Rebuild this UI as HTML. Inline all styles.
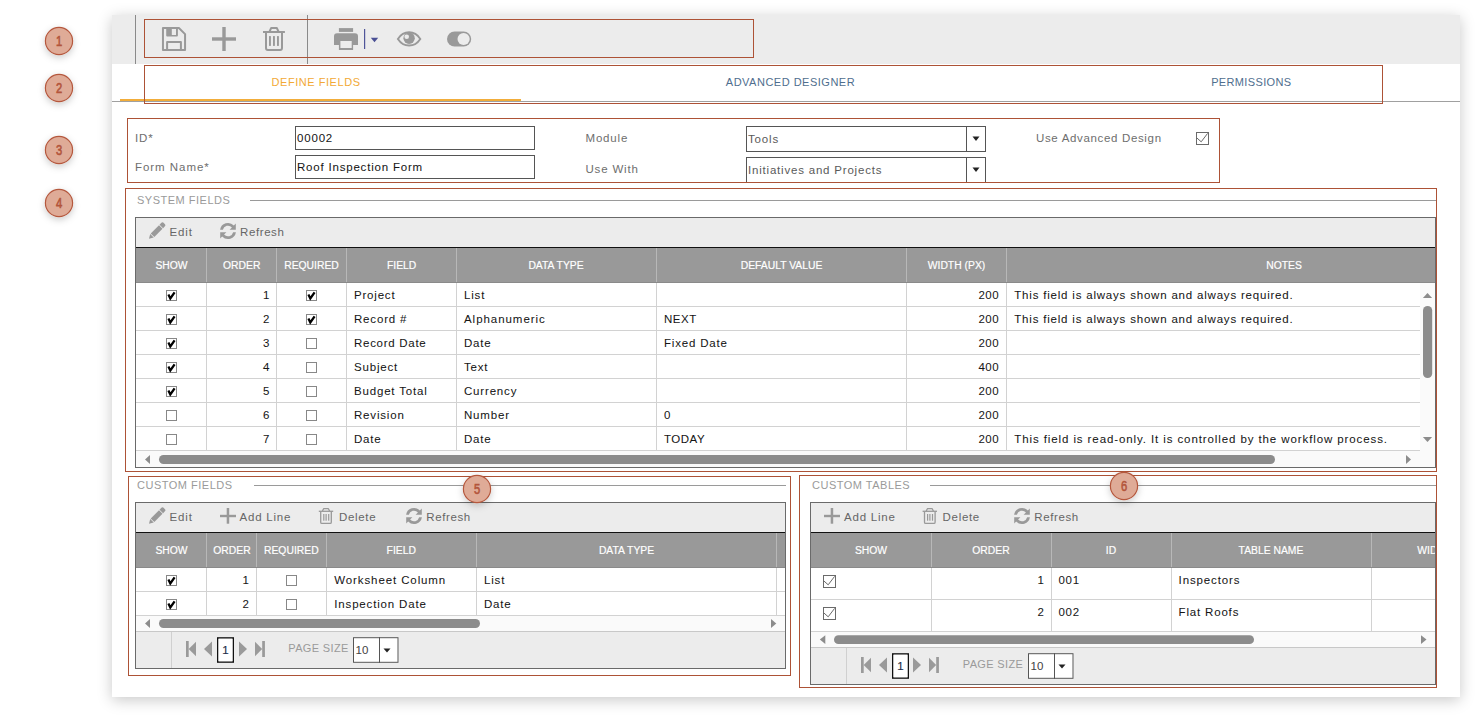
<!DOCTYPE html>
<html><head><meta charset="utf-8"><title>Form Designer</title>
<style>
html,body{margin:0;padding:0;background:#fff;width:1479px;height:720px;overflow:hidden}
#panel{position:absolute;left:112px;top:15px;width:1348px;height:682px;background:#fff;box-shadow:0 3px 14px rgba(0,0,0,0.22)}
svg{position:absolute;left:0;top:0}
text{font-family:"Liberation Sans", sans-serif}
</style></head><body>
<div id="panel"></div>
<svg width="1479" height="720" viewBox="0 0 1479 720">
<defs><filter id="bsh" x="-60%" y="-60%" width="220%" height="220%"><feDropShadow dx="0" dy="2.5" stdDeviation="3.5" flood-color="#000" flood-opacity="0.2"/></filter>
<clipPath id="gclip"><rect x="0" y="0" width="1435" height="720"/></clipPath></defs>
<rect x="112" y="15" width="1348" height="49" fill="#ececec" />
<rect x="135" y="15" width="1" height="49" fill="#8a8a8a" />
<rect x="307" y="15" width="1" height="49" fill="#8a8a8a" />
<g transform="translate(162,27)" fill="none" stroke="#999999" stroke-width="2.0" stroke-linejoin="round"><path d="M0.95 0.95 H16.9 L23.05 7.1 V23.05 H0.95 Z"/><rect x="5.1" y="15.1" width="13.8" height="8" /></g>
<path transform="translate(162,27)" fill="#999999" fill-rule="evenodd" d="M4.2 0.5 H15.9 V8.6 Q15.9 9.6 14.9 9.6 H5.2 Q4.2 9.6 4.2 8.6 Z M9.8 1.9 H14 V8 H9.8 Z"/>
<rect x="212" y="37.3" width="24" height="3.4" fill="#999999" />
<rect x="222.3" y="27" width="3.4" height="24" fill="#999999" />
<g transform="translate(258,23)" fill="none" stroke="#999999" stroke-width="2.0"><path d="M5 9 H26.9"/><path d="M11.6 8.5 L13.2 4.9 H18.8 L20.4 8.5" stroke-linejoin="round"/><path d="M8 9.5 V25 Q8 26.9 9.9 26.9 H22.1 Q24 26.9 24 25 V9.5"/></g>
<rect x="269" y="36.1" width="1.9" height="9.8" fill="#999999" />
<rect x="273" y="36.1" width="1.9" height="9.8" fill="#999999" />
<rect x="277" y="36.1" width="1.9" height="9.8" fill="#999999" />
<g transform="translate(330,23)" fill="#999999"><rect x="8.9" y="5.1" width="14.2" height="3.8"/><path fill-rule="evenodd" d="M4 13.2 Q4 10.2 7 10.2 H25 Q28 10.2 28 13.2 V22 H23.1 V26.9 H8.9 V22 H4 Z M10.4 18 H21.7 V25.1 H10.4 Z"/></g>
<rect x="364" y="29" width="1.2" height="20" fill="#4f5599" />
<path d="M370.8 37.8 H378.2 L374.5 42.2 Z" fill="#4a4f94"/>
<path d="M397.9 38.9 C400.9 34.3 404.9 32.3 409.1 32.3 C413.3 32.3 417.3 34.3 420.3 38.9 C417.3 43.5 413.3 45.5 409.1 45.5 C404.9 45.5 400.9 43.5 397.9 38.9 Z" fill="none" stroke="#999999" stroke-width="1.9"/>
<circle cx="409.1" cy="38.2" r="5.7" fill="#999999"/>
<circle cx="406.7" cy="36.7" r="2.3" fill="#ececec"/>
<rect x="447" y="31.4" width="24.2" height="15.2" rx="7.6" fill="#999999"/>
<circle cx="463.6" cy="39" r="6.1" fill="#ececec"/>
<rect x="144.5" y="19.5" width="609" height="38" fill="none" stroke="#ad5236" stroke-width="1"/>
<rect x="112" y="101" width="1348" height="1" fill="#a0a0a0" />
<rect x="120" y="99" width="401" height="2" fill="#f2ad3a" />
<text x="271.5" y="86" font-size="11" fill="#f2a935" letter-spacing="0.55" text-anchor="start" font-weight="normal" >DEFINE FIELDS</text>
<text x="725.8" y="86" font-size="11" fill="#4f6e8e" letter-spacing="0.5" text-anchor="start" font-weight="normal" >ADVANCED DESIGNER</text>
<text x="1211.2" y="86" font-size="11" fill="#4f6e8e" letter-spacing="0.35" text-anchor="start" font-weight="normal" >PERMISSIONS</text>
<rect x="144.5" y="65.5" width="1238" height="38" fill="none" stroke="#ad5236" stroke-width="1"/>
<text x="135" y="142" font-size="11.5" fill="#6e6e6e" letter-spacing="0.82" text-anchor="0.9" font-weight="normal" >ID*</text>
<text x="135" y="171" font-size="11.5" fill="#6e6e6e" letter-spacing="0.95" text-anchor="start" font-weight="normal" >Form Name*</text>
<rect x="295.5" y="126.5" width="239" height="23" fill="none" stroke="#555" stroke-width="1"/>
<rect x="295.5" y="155.5" width="239" height="23" fill="none" stroke="#555" stroke-width="1"/>
<text x="297" y="142" font-size="11.5" fill="#161616" letter-spacing="0.82" text-anchor="0.7" font-weight="normal" stroke="#161616" stroke-width="0.04">00002</text>
<text x="297" y="171" font-size="11.5" fill="#161616" letter-spacing="0.8" text-anchor="start" font-weight="normal" stroke="#161616" stroke-width="0.04">Roof Inspection Form</text>
<text x="585.5" y="142" font-size="11.5" fill="#6e6e6e" letter-spacing="0.82" text-anchor="0.8" font-weight="normal" >Module</text>
<text x="585.5" y="173" font-size="11.5" fill="#6e6e6e" letter-spacing="0.82" text-anchor="0.8" font-weight="normal" >Use With</text>
<rect x="746.5" y="126.5" width="239" height="25" fill="none" stroke="#555" stroke-width="1"/>
<rect x="966" y="126" width="1" height="26" fill="#555" />
<path d="M972.5 136.5 H979.5 L976 141.0 Z" fill="#222"/>
<text x="748" y="143" font-size="11.5" fill="#5a5a5a" letter-spacing="0.82" text-anchor="start" font-weight="normal" >Tools</text>
<rect x="746.5" y="157.5" width="239" height="25" fill="none" stroke="#555" stroke-width="1"/>
<rect x="966" y="157" width="1" height="26" fill="#555" />
<path d="M972.5 167.5 H979.5 L976 172.0 Z" fill="#222"/>
<text x="748" y="174" font-size="11.5" fill="#5a5a5a" letter-spacing="0.8" text-anchor="start" font-weight="normal" >Initiatives and Projects</text>
<text x="1036" y="142" font-size="11.5" fill="#6e6e6e" letter-spacing="0.66" text-anchor="start" font-weight="normal" >Use Advanced Design</text>
<rect x="1196.5" y="132.5" width="12" height="12" fill="none" stroke="#6a6a6a" stroke-width="1"/>
<path d="M1196.7 137.8 L1201.2 141.8 L1207.6 133.4" fill="none" stroke="#6a6a6a" stroke-width="1"/>
<rect x="127.5" y="118.5" width="1092" height="64" fill="none" stroke="#ad5236" stroke-width="1"/>
<text x="137" y="204" font-size="11" fill="#9a9a9a" letter-spacing="0.5" text-anchor="start" font-weight="normal" >SYSTEM FIELDS</text>
<rect x="250" y="200" width="1186" height="1" fill="#9a9a9a" />
<rect x="136" y="218" width="1299" height="29" fill="#ececec" />
<rect x="136" y="247" width="1299" height="1" fill="#111" />
<rect x="136" y="248" width="1299" height="34" fill="#999999" />
<rect x="136" y="282" width="1299" height="1" fill="#8a8a8a" />
<rect x="136" y="283" width="1299" height="184" fill="#fff" />
<rect x="206" y="248" width="1" height="34" fill="#b8b8b8" />
<rect x="206" y="283" width="1" height="168" fill="#d2d2d2" />
<rect x="276" y="248" width="1" height="34" fill="#b8b8b8" />
<rect x="276" y="283" width="1" height="168" fill="#d2d2d2" />
<rect x="346" y="248" width="1" height="34" fill="#b8b8b8" />
<rect x="346" y="283" width="1" height="168" fill="#d2d2d2" />
<rect x="456" y="248" width="1" height="34" fill="#b8b8b8" />
<rect x="456" y="283" width="1" height="168" fill="#d2d2d2" />
<rect x="656" y="248" width="1" height="34" fill="#b8b8b8" />
<rect x="656" y="283" width="1" height="168" fill="#d2d2d2" />
<rect x="906" y="248" width="1" height="34" fill="#b8b8b8" />
<rect x="906" y="283" width="1" height="168" fill="#d2d2d2" />
<rect x="1006" y="248" width="1" height="34" fill="#b8b8b8" />
<rect x="1006" y="283" width="1" height="168" fill="#d2d2d2" />
<rect x="136" y="306" width="1284" height="1" fill="#d2d2d2" />
<rect x="136" y="330" width="1284" height="1" fill="#d2d2d2" />
<rect x="136" y="354" width="1284" height="1" fill="#d2d2d2" />
<rect x="136" y="378" width="1284" height="1" fill="#d2d2d2" />
<rect x="136" y="402" width="1284" height="1" fill="#d2d2d2" />
<rect x="136" y="426" width="1284" height="1" fill="#d2d2d2" />
<rect x="136" y="450" width="1284" height="1" fill="#d2d2d2" />
<rect x="1420" y="283" width="15" height="168" fill="#fafafa" />
<path d="M1422.9 297.9 L1432.1 297.9 L1427.5 292.9 Z" fill="#8c8c8c"/>
<rect x="1423" y="306" width="9.2" height="72" rx="4.6" fill="#8c8c8c"/>
<path d="M1422.9 437 L1432.1 437 L1427.5 442 Z" fill="#8c8c8c"/>
<rect x="136" y="451" width="1284" height="16" fill="#fafafa" />
<rect x="1420" y="451" width="15" height="16" fill="#fafafa" />
<path d="M150 455 L150 464 L145 459.5 Z" fill="#8c8c8c"/>
<rect x="159" y="455" width="1116" height="9" rx="4.5" fill="#8c8c8c"/>
<path d="M1406 455 L1406 464 L1411 459.5 Z" fill="#8c8c8c"/>
<rect x="135.5" y="217.5" width="1300" height="250" fill="none" stroke="#6a6a6a" stroke-width="1"/>
<g transform="translate(149,238.7) rotate(-45)" fill="#999999"><path d="M0 0 L4.2 -2.5 V2.5 Z"/><rect x="5.0" y="-2.5" width="11.6" height="5.0"/><path d="M17.4 -2.5 H20 Q21.6 -2.5 21.6 -1.0 V1.0 Q21.6 2.5 20 2.5 H17.4 Z"/></g>
<text x="169.5" y="236" font-size="11.5" fill="#666" letter-spacing="0.9" text-anchor="start" font-weight="normal" >Edit</text>
<g transform="translate(220,223)" fill="#999999"><path d="M0.09 6.8 A8 8 0 0 1 13.85 2.55 L15.8 0.6 V6.8 H9.6 L11.94 4.46 A5.3 5.3 0 0 0 2.84 6.8 Z"/><path d="M15.91 9.2 A8 8 0 0 1 2.15 13.45 L0.2 15.4 V9.2 H6.4 L4.06 11.54 A5.3 5.3 0 0 0 13.16 9.2 Z"/></g>
<text x="240" y="236" font-size="11.5" fill="#666" letter-spacing="0.6" text-anchor="start" font-weight="normal" >Refresh</text>
<text x="171.5" y="269" font-size="11.5" fill="#ffffff" letter-spacing="0" text-anchor="middle" font-weight="normal" stroke="#fff" stroke-width="0.2" transform="translate(171.5,0) scale(0.9,1) translate(-171.5,0)">SHOW</text>
<text x="241.7" y="269" font-size="11.5" fill="#ffffff" letter-spacing="0" text-anchor="middle" font-weight="normal" stroke="#fff" stroke-width="0.2" transform="translate(241.7,0) scale(0.9,1) translate(-241.7,0)">ORDER</text>
<text x="311.5" y="269" font-size="11.5" fill="#ffffff" letter-spacing="0" text-anchor="middle" font-weight="normal" stroke="#fff" stroke-width="0.2" transform="translate(311.5,0) scale(0.9,1) translate(-311.5,0)">REQUIRED</text>
<text x="401.6" y="269" font-size="11.5" fill="#ffffff" letter-spacing="0" text-anchor="middle" font-weight="normal" stroke="#fff" stroke-width="0.2" transform="translate(401.6,0) scale(0.9,1) translate(-401.6,0)">FIELD</text>
<text x="556" y="269" font-size="11.5" fill="#ffffff" letter-spacing="0" text-anchor="middle" font-weight="normal" stroke="#fff" stroke-width="0.2" transform="translate(556,0) scale(0.9,1) translate(-556,0)">DATA TYPE</text>
<text x="781.5" y="269" font-size="11.5" fill="#ffffff" letter-spacing="0" text-anchor="middle" font-weight="normal" stroke="#fff" stroke-width="0.2" transform="translate(781.5,0) scale(0.9,1) translate(-781.5,0)">DEFAULT VALUE</text>
<text x="956.5" y="269" font-size="11.5" fill="#ffffff" letter-spacing="0" text-anchor="middle" font-weight="normal" stroke="#fff" stroke-width="0.2" transform="translate(956.5,0) scale(0.9,1) translate(-956.5,0)">WIDTH (PX)</text>
<text x="1284" y="269" font-size="11.5" fill="#ffffff" letter-spacing="0" text-anchor="middle" font-weight="normal" stroke="#fff" stroke-width="0.2" transform="translate(1284,0) scale(0.9,1) translate(-1284,0)">NOTES</text>
<rect x="166.5" y="290.5" width="10" height="10" fill="none" stroke="#888" stroke-width="1"/>
<path d="M168.4 294.6 L170.3 298.4 L174.6 292.3" fill="none" stroke="#000" stroke-width="2.3" stroke-linejoin="miter"/>
<text x="269.5" y="298.6" font-size="11.5" fill="#161616" letter-spacing="0" text-anchor="end" font-weight="normal" stroke="#161616" stroke-width="0.04">1</text>
<rect x="306.5" y="290.5" width="10" height="10" fill="none" stroke="#888" stroke-width="1"/>
<path d="M308.4 294.6 L310.3 298.4 L314.6 292.3" fill="none" stroke="#000" stroke-width="2.3" stroke-linejoin="miter"/>
<text x="354" y="298.6" font-size="11.5" fill="#161616" letter-spacing="0.8" text-anchor="start" font-weight="normal" stroke="#161616" stroke-width="0.04">Project</text>
<text x="464" y="298.6" font-size="11.5" fill="#161616" letter-spacing="0.82" text-anchor="start" font-weight="normal" stroke="#161616" stroke-width="0.04">List</text>
<text x="999" y="298.6" font-size="11.5" fill="#161616" letter-spacing="0.45" text-anchor="end" font-weight="normal" stroke="#161616" stroke-width="0.04">200</text>
<text x="1014.3" y="298.6" font-size="11.5" fill="#161616" letter-spacing="0.8" text-anchor="start" font-weight="normal" stroke="#161616" stroke-width="0.04">This field is always shown and always required.</text>
<rect x="166.5" y="314.5" width="10" height="10" fill="none" stroke="#888" stroke-width="1"/>
<path d="M168.4 318.6 L170.3 322.4 L174.6 316.3" fill="none" stroke="#000" stroke-width="2.3" stroke-linejoin="miter"/>
<text x="269.5" y="322.6" font-size="11.5" fill="#161616" letter-spacing="0" text-anchor="end" font-weight="normal" stroke="#161616" stroke-width="0.04">2</text>
<rect x="306.5" y="314.5" width="10" height="10" fill="none" stroke="#888" stroke-width="1"/>
<path d="M308.4 318.6 L310.3 322.4 L314.6 316.3" fill="none" stroke="#000" stroke-width="2.3" stroke-linejoin="miter"/>
<text x="354" y="322.6" font-size="11.5" fill="#161616" letter-spacing="0.82" text-anchor="start" font-weight="normal" stroke="#161616" stroke-width="0.04">Record #</text>
<text x="464" y="322.6" font-size="11.5" fill="#161616" letter-spacing="0.95" text-anchor="start" font-weight="normal" stroke="#161616" stroke-width="0.04">Alphanumeric</text>
<text x="664" y="322.6" font-size="11.5" fill="#161616" letter-spacing="0.5" text-anchor="start" font-weight="normal" stroke="#161616" stroke-width="0.04">NEXT</text>
<text x="999" y="322.6" font-size="11.5" fill="#161616" letter-spacing="0.45" text-anchor="end" font-weight="normal" stroke="#161616" stroke-width="0.04">200</text>
<text x="1014.3" y="322.6" font-size="11.5" fill="#161616" letter-spacing="0.8" text-anchor="start" font-weight="normal" stroke="#161616" stroke-width="0.04">This field is always shown and always required.</text>
<rect x="166.5" y="338.5" width="10" height="10" fill="none" stroke="#888" stroke-width="1"/>
<path d="M168.4 342.6 L170.3 346.4 L174.6 340.3" fill="none" stroke="#000" stroke-width="2.3" stroke-linejoin="miter"/>
<text x="269.5" y="346.6" font-size="11.5" fill="#161616" letter-spacing="0" text-anchor="end" font-weight="normal" stroke="#161616" stroke-width="0.04">3</text>
<rect x="306.5" y="338.5" width="10" height="10" fill="none" stroke="#888" stroke-width="1"/>
<text x="354" y="346.6" font-size="11.5" fill="#161616" letter-spacing="0.72" text-anchor="start" font-weight="normal" stroke="#161616" stroke-width="0.04">Record Date</text>
<text x="464" y="346.6" font-size="11.5" fill="#161616" letter-spacing="0.82" text-anchor="start" font-weight="normal" stroke="#161616" stroke-width="0.04">Date</text>
<text x="664" y="346.6" font-size="11.5" fill="#161616" letter-spacing="0.82" text-anchor="start" font-weight="normal" stroke="#161616" stroke-width="0.04">Fixed Date</text>
<text x="999" y="346.6" font-size="11.5" fill="#161616" letter-spacing="0.45" text-anchor="end" font-weight="normal" stroke="#161616" stroke-width="0.04">200</text>
<rect x="166.5" y="362.5" width="10" height="10" fill="none" stroke="#888" stroke-width="1"/>
<path d="M168.4 366.6 L170.3 370.4 L174.6 364.3" fill="none" stroke="#000" stroke-width="2.3" stroke-linejoin="miter"/>
<text x="269.5" y="370.6" font-size="11.5" fill="#161616" letter-spacing="0" text-anchor="end" font-weight="normal" stroke="#161616" stroke-width="0.04">4</text>
<rect x="306.5" y="362.5" width="10" height="10" fill="none" stroke="#888" stroke-width="1"/>
<text x="354" y="370.6" font-size="11.5" fill="#161616" letter-spacing="0.82" text-anchor="start" font-weight="normal" stroke="#161616" stroke-width="0.04">Subject</text>
<text x="464" y="370.6" font-size="11.5" fill="#161616" letter-spacing="0.82" text-anchor="start" font-weight="normal" stroke="#161616" stroke-width="0.04">Text</text>
<text x="999" y="370.6" font-size="11.5" fill="#161616" letter-spacing="0.45" text-anchor="end" font-weight="normal" stroke="#161616" stroke-width="0.04">400</text>
<rect x="166.5" y="386.5" width="10" height="10" fill="none" stroke="#888" stroke-width="1"/>
<path d="M168.4 390.6 L170.3 394.4 L174.6 388.3" fill="none" stroke="#000" stroke-width="2.3" stroke-linejoin="miter"/>
<text x="269.5" y="394.6" font-size="11.5" fill="#161616" letter-spacing="0" text-anchor="end" font-weight="normal" stroke="#161616" stroke-width="0.04">5</text>
<rect x="306.5" y="386.5" width="10" height="10" fill="none" stroke="#888" stroke-width="1"/>
<text x="354" y="394.6" font-size="11.5" fill="#161616" letter-spacing="0.82" text-anchor="start" font-weight="normal" stroke="#161616" stroke-width="0.04">Budget Total</text>
<text x="464" y="394.6" font-size="11.5" fill="#161616" letter-spacing="0.82" text-anchor="start" font-weight="normal" stroke="#161616" stroke-width="0.04">Currency</text>
<text x="999" y="394.6" font-size="11.5" fill="#161616" letter-spacing="0.45" text-anchor="end" font-weight="normal" stroke="#161616" stroke-width="0.04">200</text>
<rect x="166.5" y="410.5" width="10" height="10" fill="none" stroke="#888" stroke-width="1"/>
<text x="269.5" y="418.6" font-size="11.5" fill="#161616" letter-spacing="0" text-anchor="end" font-weight="normal" stroke="#161616" stroke-width="0.04">6</text>
<rect x="306.5" y="410.5" width="10" height="10" fill="none" stroke="#888" stroke-width="1"/>
<text x="354" y="418.6" font-size="11.5" fill="#161616" letter-spacing="0.82" text-anchor="start" font-weight="normal" stroke="#161616" stroke-width="0.04">Revision</text>
<text x="464" y="418.6" font-size="11.5" fill="#161616" letter-spacing="0.82" text-anchor="start" font-weight="normal" stroke="#161616" stroke-width="0.04">Number</text>
<text x="664" y="418.6" font-size="11.5" fill="#161616" letter-spacing="0.82" text-anchor="start" font-weight="normal" stroke="#161616" stroke-width="0.04">0</text>
<text x="999" y="418.6" font-size="11.5" fill="#161616" letter-spacing="0.45" text-anchor="end" font-weight="normal" stroke="#161616" stroke-width="0.04">200</text>
<rect x="166.5" y="434.5" width="10" height="10" fill="none" stroke="#888" stroke-width="1"/>
<text x="269.5" y="442.6" font-size="11.5" fill="#161616" letter-spacing="0" text-anchor="end" font-weight="normal" stroke="#161616" stroke-width="0.04">7</text>
<rect x="306.5" y="434.5" width="10" height="10" fill="none" stroke="#888" stroke-width="1"/>
<text x="354" y="442.6" font-size="11.5" fill="#161616" letter-spacing="0.82" text-anchor="start" font-weight="normal" stroke="#161616" stroke-width="0.04">Date</text>
<text x="464" y="442.6" font-size="11.5" fill="#161616" letter-spacing="0.82" text-anchor="start" font-weight="normal" stroke="#161616" stroke-width="0.04">Date</text>
<text x="664" y="442.6" font-size="11.5" fill="#161616" letter-spacing="0.5" text-anchor="start" font-weight="normal" stroke="#161616" stroke-width="0.04">TODAY</text>
<text x="999" y="442.6" font-size="11.5" fill="#161616" letter-spacing="0.45" text-anchor="end" font-weight="normal" stroke="#161616" stroke-width="0.04">200</text>
<text x="1014.3" y="442.6" font-size="11.5" fill="#161616" letter-spacing="0.9" text-anchor="start" font-weight="normal" stroke="#161616" stroke-width="0.04">This field is read-only. It is controlled by the workflow process.</text>
<rect x="125.5" y="188.5" width="1311" height="283" fill="none" stroke="#ad5236" stroke-width="1"/>
<text x="137" y="488.7" font-size="11" fill="#9a9a9a" letter-spacing="0.5" text-anchor="start" font-weight="normal" >CUSTOM FIELDS</text>
<rect x="254" y="485" width="532" height="1" fill="#9a9a9a" />
<rect x="136" y="503" width="649" height="29" fill="#ececec" />
<rect x="136" y="532" width="649" height="1" fill="#111" />
<rect x="136" y="533" width="649" height="34" fill="#999999" />
<rect x="136" y="567" width="649" height="1" fill="#8a8a8a" />
<rect x="136" y="568" width="649" height="63" fill="#fff" />
<rect x="206" y="533" width="1" height="34" fill="#b8b8b8" />
<rect x="206" y="568" width="1" height="47" fill="#d2d2d2" />
<rect x="256" y="533" width="1" height="34" fill="#b8b8b8" />
<rect x="256" y="568" width="1" height="47" fill="#d2d2d2" />
<rect x="326" y="533" width="1" height="34" fill="#b8b8b8" />
<rect x="326" y="568" width="1" height="47" fill="#d2d2d2" />
<rect x="476" y="533" width="1" height="34" fill="#b8b8b8" />
<rect x="476" y="568" width="1" height="47" fill="#d2d2d2" />
<rect x="776" y="533" width="1" height="34" fill="#b8b8b8" />
<rect x="776" y="568" width="1" height="47" fill="#d2d2d2" />
<rect x="136" y="591" width="649" height="1" fill="#d2d2d2" />
<rect x="136" y="615" width="649" height="1" fill="#d2d2d2" />
<rect x="136" y="616" width="649" height="15" fill="#fafafa" />
<path d="M150 619 L150 628 L145 623.5 Z" fill="#8c8c8c"/>
<rect x="159" y="619" width="321" height="9" rx="4.5" fill="#8c8c8c"/>
<path d="M771 619 L771 628 L776.3 623.5 Z" fill="#8c8c8c"/>
<rect x="136" y="632" width="649" height="36" fill="#ececec" />
<rect x="136" y="631" width="649" height="1" fill="#c8c8c8" />
<rect x="171" y="632" width="1" height="36" fill="#d0d0d0" />
<rect x="186" y="641.0" width="2.7" height="16" fill="#9a9a9a" />
<path d="M188.7 649.0 L196 641.8 L196 656.2 Z" fill="#9a9a9a"/>
<path d="M204 649.0 L212 641.4 L212 656.6 Z" fill="#9a9a9a"/>
<rect x="217.75" y="637.95" width="15.5" height="24.09999999999991" fill="none" stroke="#111" stroke-width="1.5"/>
<rect x="218.5" y="638.7" width="14" height="22.6" fill="#fff" />
<text x="225.5" y="654.0" font-size="11.5" fill="#1c2e4a" letter-spacing="0" text-anchor="middle" font-weight="normal" stroke="#1c2e4a" stroke-width="0.15">1</text>
<path d="M239 641.4 L239 656.6 L247 649.0 Z" fill="#9a9a9a"/>
<path d="M255 641.8 L255 656.2 L262.2 649.0 Z" fill="#9a9a9a"/>
<rect x="262.2" y="641.0" width="2.7" height="16" fill="#9a9a9a" />
<text x="288.3" y="652.2" font-size="11" fill="#9a9a9a" letter-spacing="0.35" text-anchor="start" font-weight="normal" >PAGE SIZE</text>
<rect x="353" y="637.2" width="45.5" height="25.6" fill="#fff" />
<rect x="353.5" y="637.7" width="44.5" height="24.59999999999991" fill="none" stroke="#555" stroke-width="1"/>
<rect x="379" y="637.2" width="1" height="25.59999999999991" fill="#555" />
<path d="M383.5 648.5 H390.5 L387 652.5 Z" fill="#222"/>
<text x="355.5" y="654.2" font-size="11.5" fill="#444" letter-spacing="0" text-anchor="start" font-weight="normal" stroke="#444" stroke-width="0.04">10</text>
<rect x="135.5" y="502.5" width="650" height="166" fill="none" stroke="#6a6a6a" stroke-width="1"/>
<g transform="translate(149,523.7) rotate(-45)" fill="#999999"><path d="M0 0 L4.2 -2.5 V2.5 Z"/><rect x="5.0" y="-2.5" width="11.6" height="5.0"/><path d="M17.4 -2.5 H20 Q21.6 -2.5 21.6 -1.0 V1.0 Q21.6 2.5 20 2.5 H17.4 Z"/></g>
<text x="169.5" y="521" font-size="11.5" fill="#666" letter-spacing="0.9" text-anchor="start" font-weight="normal" >Edit</text>
<rect x="220" y="514.8" width="16" height="2.4" fill="#999999" />
<rect x="226.7" y="508" width="2.5" height="15.7" fill="#999999" />
<text x="239.5" y="521" font-size="11.5" fill="#666" letter-spacing="0.79" text-anchor="start" font-weight="normal" >Add Line</text>
<g transform="translate(318.8,508)" fill="none" stroke="#999999" stroke-width="1.3"><path d="M0 3.3 H14.4"/><path d="M3.6 3 L4.8 0.7 H9.6 L10.8 3" stroke-linejoin="round"/><path d="M1.9 3.6 V14.2 Q1.9 15.4 3.1 15.4 H11.3 Q12.5 15.4 12.5 14.2 V3.6"/></g>
<rect x="323.2" y="514" width="1.2" height="6.7" fill="#999999" />
<rect x="325.5" y="514" width="1.2" height="6.7" fill="#999999" />
<rect x="328.1" y="514" width="1.2" height="6.7" fill="#999999" />
<text x="339" y="521" font-size="11.5" fill="#666" letter-spacing="0.68" text-anchor="start" font-weight="normal" >Delete</text>
<g transform="translate(406,508)" fill="#999999"><path d="M0.09 6.8 A8 8 0 0 1 13.85 2.55 L15.8 0.6 V6.8 H9.6 L11.94 4.46 A5.3 5.3 0 0 0 2.84 6.8 Z"/><path d="M15.91 9.2 A8 8 0 0 1 2.15 13.45 L0.2 15.4 V9.2 H6.4 L4.06 11.54 A5.3 5.3 0 0 0 13.16 9.2 Z"/></g>
<text x="426.3" y="521" font-size="11.5" fill="#666" letter-spacing="0.6" text-anchor="start" font-weight="normal" >Refresh</text>
<text x="171.5" y="554" font-size="11.5" fill="#ffffff" letter-spacing="0" text-anchor="middle" font-weight="normal" stroke="#fff" stroke-width="0.2" transform="translate(171.5,0) scale(0.9,1) translate(-171.5,0)">SHOW</text>
<text x="232" y="554" font-size="11.5" fill="#ffffff" letter-spacing="0" text-anchor="middle" font-weight="normal" stroke="#fff" stroke-width="0.2" transform="translate(232,0) scale(0.9,1) translate(-232,0)">ORDER</text>
<text x="291.3" y="554" font-size="11.5" fill="#ffffff" letter-spacing="0" text-anchor="middle" font-weight="normal" stroke="#fff" stroke-width="0.2" transform="translate(291.3,0) scale(0.9,1) translate(-291.3,0)">REQUIRED</text>
<text x="401.3" y="554" font-size="11.5" fill="#ffffff" letter-spacing="0" text-anchor="middle" font-weight="normal" stroke="#fff" stroke-width="0.2" transform="translate(401.3,0) scale(0.9,1) translate(-401.3,0)">FIELD</text>
<text x="626.5" y="554" font-size="11.5" fill="#ffffff" letter-spacing="0" text-anchor="middle" font-weight="normal" stroke="#fff" stroke-width="0.2" transform="translate(626.5,0) scale(0.9,1) translate(-626.5,0)">DATA TYPE</text>
<rect x="166.5" y="575.5" width="10" height="10" fill="none" stroke="#888" stroke-width="1"/>
<path d="M168.4 579.6 L170.3 583.4 L174.6 577.3" fill="none" stroke="#000" stroke-width="2.3" stroke-linejoin="miter"/>
<text x="249" y="584" font-size="11.5" fill="#161616" letter-spacing="0" text-anchor="end" font-weight="normal" stroke="#161616" stroke-width="0.04">1</text>
<rect x="286.5" y="575.5" width="10" height="10" fill="none" stroke="#888" stroke-width="1"/>
<text x="334.3" y="584" font-size="11.5" fill="#161616" letter-spacing="0.89" text-anchor="start" font-weight="normal" stroke="#161616" stroke-width="0.04">Worksheet Column</text>
<text x="484" y="584" font-size="11.5" fill="#161616" letter-spacing="0.82" text-anchor="start" font-weight="normal" stroke="#161616" stroke-width="0.04">List</text>
<rect x="166.5" y="599.5" width="10" height="10" fill="none" stroke="#888" stroke-width="1"/>
<path d="M168.4 603.6 L170.3 607.4 L174.6 601.3" fill="none" stroke="#000" stroke-width="2.3" stroke-linejoin="miter"/>
<text x="249" y="608" font-size="11.5" fill="#161616" letter-spacing="0" text-anchor="end" font-weight="normal" stroke="#161616" stroke-width="0.04">2</text>
<rect x="286.5" y="599.5" width="10" height="10" fill="none" stroke="#888" stroke-width="1"/>
<text x="334.3" y="608" font-size="11.5" fill="#161616" letter-spacing="0.83" text-anchor="start" font-weight="normal" stroke="#161616" stroke-width="0.04">Inspection Date</text>
<text x="484" y="608" font-size="11.5" fill="#161616" letter-spacing="0.82" text-anchor="start" font-weight="normal" stroke="#161616" stroke-width="0.04">Date</text>
<rect x="128.5" y="476.5" width="662" height="199" fill="none" stroke="#ad5236" stroke-width="1"/>
<text x="812" y="488.7" font-size="11" fill="#9a9a9a" letter-spacing="0.5" text-anchor="start" font-weight="normal" >CUSTOM TABLES</text>
<rect x="930" y="485" width="506" height="1" fill="#9a9a9a" />
<rect x="811" y="503" width="624" height="29" fill="#ececec" />
<rect x="811" y="532" width="624" height="1" fill="#111" />
<rect x="811" y="533" width="624" height="34" fill="#999999" />
<rect x="811" y="567" width="624" height="1" fill="#8a8a8a" />
<rect x="811" y="568" width="624" height="63" fill="#fff" />
<rect x="931" y="533" width="1" height="34" fill="#b8b8b8" />
<rect x="931" y="568" width="1" height="63" fill="#d2d2d2" />
<rect x="1051" y="533" width="1" height="34" fill="#b8b8b8" />
<rect x="1051" y="568" width="1" height="63" fill="#d2d2d2" />
<rect x="1171" y="533" width="1" height="34" fill="#b8b8b8" />
<rect x="1171" y="568" width="1" height="63" fill="#d2d2d2" />
<rect x="1371" y="533" width="1" height="34" fill="#b8b8b8" />
<rect x="1371" y="568" width="1" height="63" fill="#d2d2d2" />
<rect x="811" y="599" width="624" height="1" fill="#d2d2d2" />
<rect x="811" y="631" width="624" height="1" fill="#d2d2d2" />
<rect x="811" y="632" width="624" height="15" fill="#fafafa" />
<path d="M825.3 635.3 L825.3 644 L819.8 639.6 Z" fill="#8c8c8c"/>
<rect x="834" y="635.3" width="420" height="8.8" rx="4.4" fill="#8c8c8c"/>
<path d="M1421 635.3 L1421 644 L1426.5 639.6 Z" fill="#8c8c8c"/>
<rect x="811" y="648" width="624" height="36" fill="#ececec" />
<rect x="811" y="647" width="624" height="1" fill="#c8c8c8" />
<rect x="846" y="648" width="1" height="36" fill="#d0d0d0" />
<rect x="861" y="657.0" width="2.7" height="16" fill="#9a9a9a" />
<path d="M863.7 665.0 L871 657.8 L871 672.2 Z" fill="#9a9a9a"/>
<path d="M879 665.0 L887 657.4 L887 672.6 Z" fill="#9a9a9a"/>
<rect x="892.75" y="653.95" width="15.5" height="24.09999999999991" fill="none" stroke="#111" stroke-width="1.5"/>
<rect x="893.5" y="654.7" width="14" height="22.6" fill="#fff" />
<text x="900.5" y="670.0" font-size="11.5" fill="#1c2e4a" letter-spacing="0" text-anchor="middle" font-weight="normal" stroke="#1c2e4a" stroke-width="0.15">1</text>
<path d="M913 657.4 L913 672.6 L921 665.0 Z" fill="#9a9a9a"/>
<path d="M929 657.8 L929 672.2 L936.2 665.0 Z" fill="#9a9a9a"/>
<rect x="936.2" y="657.0" width="2.7" height="16" fill="#9a9a9a" />
<text x="962.8" y="668.2" font-size="11" fill="#9a9a9a" letter-spacing="0.35" text-anchor="start" font-weight="normal" >PAGE SIZE</text>
<rect x="1028" y="653.2" width="45.5" height="25.6" fill="#fff" />
<rect x="1028.5" y="653.7" width="44.5" height="24.59999999999991" fill="none" stroke="#555" stroke-width="1"/>
<rect x="1054" y="653.2" width="1" height="25.59999999999991" fill="#555" />
<path d="M1058.5 664.5 H1065.5 L1062 668.5 Z" fill="#222"/>
<text x="1030.5" y="670.2" font-size="11.5" fill="#444" letter-spacing="0" text-anchor="start" font-weight="normal" stroke="#444" stroke-width="0.04">10</text>
<rect x="810.5" y="502.5" width="625" height="182" fill="none" stroke="#6a6a6a" stroke-width="1"/>
<rect x="824" y="514.8" width="16" height="2.4" fill="#999999" />
<rect x="830.7" y="508" width="2.5" height="15.7" fill="#999999" />
<text x="844" y="521" font-size="11.5" fill="#666" letter-spacing="0.79" text-anchor="start" font-weight="normal" >Add Line</text>
<g transform="translate(922.6,508)" fill="none" stroke="#999999" stroke-width="1.3"><path d="M0 3.3 H14.4"/><path d="M3.6 3 L4.8 0.7 H9.6 L10.8 3" stroke-linejoin="round"/><path d="M1.9 3.6 V14.2 Q1.9 15.4 3.1 15.4 H11.3 Q12.5 15.4 12.5 14.2 V3.6"/></g>
<rect x="927.0" y="514" width="1.2" height="6.7" fill="#999999" />
<rect x="929.3000000000001" y="514" width="1.2" height="6.7" fill="#999999" />
<rect x="931.9" y="514" width="1.2" height="6.7" fill="#999999" />
<text x="942.6" y="521" font-size="11.5" fill="#666" letter-spacing="0.68" text-anchor="start" font-weight="normal" >Delete</text>
<g transform="translate(1014,508)" fill="#999999"><path d="M0.09 6.8 A8 8 0 0 1 13.85 2.55 L15.8 0.6 V6.8 H9.6 L11.94 4.46 A5.3 5.3 0 0 0 2.84 6.8 Z"/><path d="M15.91 9.2 A8 8 0 0 1 2.15 13.45 L0.2 15.4 V9.2 H6.4 L4.06 11.54 A5.3 5.3 0 0 0 13.16 9.2 Z"/></g>
<text x="1034.3" y="521" font-size="11.5" fill="#666" letter-spacing="0.6" text-anchor="start" font-weight="normal" >Refresh</text>
<text x="871" y="554" font-size="11.5" fill="#ffffff" letter-spacing="0" text-anchor="middle" font-weight="normal" stroke="#fff" stroke-width="0.2" transform="translate(871,0) scale(0.9,1) translate(-871,0)">SHOW</text>
<text x="991" y="554" font-size="11.5" fill="#ffffff" letter-spacing="0" text-anchor="middle" font-weight="normal" stroke="#fff" stroke-width="0.2" transform="translate(991,0) scale(0.9,1) translate(-991,0)">ORDER</text>
<text x="1111" y="554" font-size="11.5" fill="#ffffff" letter-spacing="0" text-anchor="middle" font-weight="normal" stroke="#fff" stroke-width="0.2" transform="translate(1111,0) scale(0.9,1) translate(-1111,0)">ID</text>
<text x="1271" y="554" font-size="11.5" fill="#ffffff" letter-spacing="0" text-anchor="middle" font-weight="normal" stroke="#fff" stroke-width="0.2" transform="translate(1271,0) scale(0.9,1) translate(-1271,0)">TABLE NAME</text>
<g clip-path="url(#gclip)">
<text x="1446" y="554" font-size="11.5" fill="#ffffff" letter-spacing="0" text-anchor="middle" font-weight="normal" stroke="#fff" stroke-width="0.2" transform="translate(1446,0) scale(0.9,1) translate(-1446,0)">WIDTH (PX)</text>
</g>
<rect x="823.5" y="575.5" width="12" height="12" fill="none" stroke="#6a6a6a" stroke-width="1"/>
<path d="M823.7 580.8 L828.2 584.8 L834.6 576.4" fill="none" stroke="#6a6a6a" stroke-width="1"/>
<text x="1044" y="584" font-size="11.5" fill="#161616" letter-spacing="0" text-anchor="end" font-weight="normal" stroke="#161616" stroke-width="0.04">1</text>
<text x="1058.5" y="584" font-size="11.5" fill="#161616" letter-spacing="0.7" text-anchor="start" font-weight="normal" stroke="#161616" stroke-width="0.04">001</text>
<text x="1178.6" y="584" font-size="11.5" fill="#161616" letter-spacing="0.87" text-anchor="start" font-weight="normal" stroke="#161616" stroke-width="0.04">Inspectors</text>
<rect x="823.5" y="607.5" width="12" height="12" fill="none" stroke="#6a6a6a" stroke-width="1"/>
<path d="M823.7 612.8 L828.2 616.8 L834.6 608.4" fill="none" stroke="#6a6a6a" stroke-width="1"/>
<text x="1044" y="616" font-size="11.5" fill="#161616" letter-spacing="0" text-anchor="end" font-weight="normal" stroke="#161616" stroke-width="0.04">2</text>
<text x="1058.5" y="616" font-size="11.5" fill="#161616" letter-spacing="0.7" text-anchor="start" font-weight="normal" stroke="#161616" stroke-width="0.04">002</text>
<text x="1178.6" y="616" font-size="11.5" fill="#161616" letter-spacing="0.82" text-anchor="start" font-weight="normal" stroke="#161616" stroke-width="0.04">Flat Roofs</text>
<rect x="799.5" y="475.5" width="637" height="212" fill="none" stroke="#ad5236" stroke-width="1"/>
<g filter="url(#bsh)"><circle cx="59" cy="41" r="13.6" fill="#dfab97" stroke="#b5583e" stroke-width="1.2"/></g>
<text x="59" y="46.0" font-size="14" font-weight="normal" fill="#b3553b" stroke="#b3553b" stroke-width="0.6" text-anchor="middle" transform="translate(59,0) scale(0.8,1) translate(-59,0)">1</text>
<g filter="url(#bsh)"><circle cx="59" cy="88" r="13.6" fill="#dfab97" stroke="#b5583e" stroke-width="1.2"/></g>
<text x="59" y="93.0" font-size="14" font-weight="normal" fill="#b3553b" stroke="#b3553b" stroke-width="0.6" text-anchor="middle" transform="translate(59,0) scale(0.8,1) translate(-59,0)">2</text>
<g filter="url(#bsh)"><circle cx="59" cy="150" r="13.6" fill="#dfab97" stroke="#b5583e" stroke-width="1.2"/></g>
<text x="59" y="155.0" font-size="14" font-weight="normal" fill="#b3553b" stroke="#b3553b" stroke-width="0.6" text-anchor="middle" transform="translate(59,0) scale(0.8,1) translate(-59,0)">3</text>
<g filter="url(#bsh)"><circle cx="59" cy="203" r="13.6" fill="#dfab97" stroke="#b5583e" stroke-width="1.2"/></g>
<text x="59" y="208.0" font-size="14" font-weight="normal" fill="#b3553b" stroke="#b3553b" stroke-width="0.6" text-anchor="middle" transform="translate(59,0) scale(0.8,1) translate(-59,0)">4</text>
<g filter="url(#bsh)"><circle cx="477" cy="489" r="13.6" fill="#dfab97" stroke="#b5583e" stroke-width="1.2"/></g>
<text x="477" y="494.0" font-size="14" font-weight="normal" fill="#b3553b" stroke="#b3553b" stroke-width="0.6" text-anchor="middle" transform="translate(477,0) scale(0.8,1) translate(-477,0)">5</text>
<g filter="url(#bsh)"><circle cx="1124" cy="486" r="13.6" fill="#dfab97" stroke="#b5583e" stroke-width="1.2"/></g>
<text x="1124" y="491.0" font-size="14" font-weight="normal" fill="#b3553b" stroke="#b3553b" stroke-width="0.6" text-anchor="middle" transform="translate(1124,0) scale(0.8,1) translate(-1124,0)">6</text>
</svg>
</body></html>
